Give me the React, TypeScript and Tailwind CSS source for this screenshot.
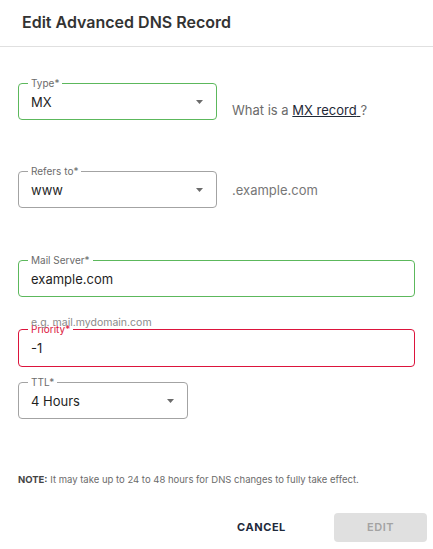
import React from "react";

type Tone = "green" | "red" | "gray";

const borderFor: Record<Tone, string> = {
  green: "border-[#5cb85c]",
  red: "border-[#dc143c]",
  gray: "border-[#a3a3a3]",
};

function Caret() {
  return (
    <svg className="ml-auto w-[7px] h-[4px] shrink-0" viewBox="0 0 7 4" fill="#6b6b6b">
      <path d="M0 0h7L3.5 4z" />
    </svg>
  );
}

function Field({
  label,
  value,
  tone,
  width,
  select,
}: {
  label: string;
  value: string;
  tone: Tone;
  width: string;
  select?: boolean;
}) {
  return (
    <div
      className={`relative h-[37px] ${width} shrink-0 rounded-[4px] border ${borderFor[tone]} flex items-center pl-[12px] pr-[13px]`}
    >
      <span
        className={`absolute left-[9px] top-[-7px] bg-white px-[3px] text-[10px] leading-[12px] ${
          tone === "red" ? "text-[#dc143c]" : "text-[#6b6b6b]"
        }`}
      >
        {label}
      </span>
      <span className="text-[13px] leading-[16px] text-[#1f1f1f]">{value}</span>
      {select && <Caret />}
    </div>
  );
}

export default function App() {
  return (
    <div
      className="w-[433px] h-[549px] bg-white overflow-hidden"
      style={{ fontFamily: "Inter, 'Noto Sans', sans-serif" }}
    >
      {/* Header */}
      <div className="h-[47px] border-b border-[#e0e0e0] pt-[10px] px-[22px]">
        <h2 className="text-[16px] leading-[24px] font-semibold text-[#333333]">
          Edit Advanced DNS Record
        </h2>
      </div>

      <div className="px-[18px]">
        {/* Type */}
        <div className="mt-[36px] flex items-end gap-[15px]">
          <Field label="Type*" value="MX" tone="green" width="w-[199px]" select />
          <p className="mb-[2px] text-[13px] leading-[16px] text-[#6b6b6b]">
            What is a{" "}
            <a href="#" className="underline text-[#1f2937]">
              MX record{" "}
            </a>
            ?
          </p>
        </div>

        {/* Refers to */}
        <div className="mt-[51px] flex items-center gap-[15px]">
          <Field label="Refers to*" value="www" tone="gray" width="w-[199px]" select />
          <span className="text-[13px] leading-[16px] text-[#777777]">.example.com</span>
        </div>

        {/* Mail server */}
        <div className="relative mt-[52px]">
          <Field label="Mail Server*" value="example.com" tone="green" width="w-[397px]" />
          <span className="absolute z-10 left-[13px] top-[56px] text-[10.5px] leading-[13px] text-[#8a8a8a]">
            e.g. mail.mydomain.com
          </span>
        </div>

        {/* Priority */}
        <div className="mt-[32px] h-[38px]">
          <Field label="Priority*" value="-1" tone="red" width="w-[397px] !h-[38px]" />
        </div>

        {/* TTL */}
        <div className="mt-[15px]">
          <Field label="TTL*" value="4 Hours" tone="gray" width="w-[170px]" select />
        </div>

        {/* Note */}
        <p className="mt-[54px] text-[9.5px] leading-[14px] text-[#6b6b6b]">
          <span className="font-bold text-[#444444]">NOTE:</span> It may take up to 24 to 48
          hours for DNS changes to fully take effect.
        </p>
      </div>

      {/* Actions */}
      <div className="mt-[26px] flex items-center justify-end pr-[6px] gap-[32px]">
        <button className="h-[29px] w-[81px] text-[11px] font-bold tracking-[0.05em] text-[#1e293b]">
          CANCEL
        </button>
        <button
          disabled
          className="h-[29px] w-[93px] rounded-[4px] bg-[#e0e0e0] text-[11px] font-semibold tracking-[0.05em] text-[#a3a3a3]"
        >
          EDIT
        </button>
      </div>
    </div>
  );
}
